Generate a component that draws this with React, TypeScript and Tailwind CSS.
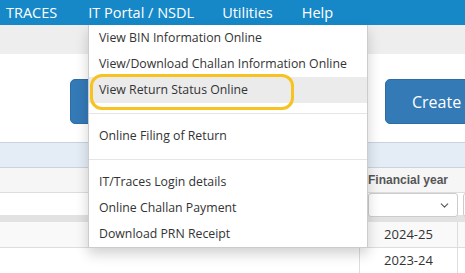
import { ChevronDown } from 'lucide-react'

const menu: (string | null)[] = [
  'View BIN Information Online',
  'View/Download Challan Information Online',
  'View Return Status Online',
  null,
  'Online Filing of Return',
  null,
  'IT/Traces Login details',
  'Online Challan Payment',
  'Download PRN Receipt',
]

function PortalMenu() {
  return (
    <div className="absolute left-[88px] top-[25px] w-[280px] border border-[#cccccc] border-t-0 bg-white shadow-[0_6px_12px_rgba(0,0,0,0.18)]">
      {menu.map((label, i) =>
        label === null ? (
          <div key={i} className="flex h-[20px] items-center">
            <div className="h-px w-full bg-[#e5e5e5]" />
          </div>
        ) : (
          <div
            key={i}
            className={`flex h-[26px] items-center whitespace-nowrap px-[10px] pt-px text-[12.3px] text-[#333333] ${
              i === 2 ? 'bg-[#ebebeb]' : ''
            }`}
          >
            {label}
          </div>
        ),
      )}
    </div>
  )
}

export default function App() {
  return (
    <div
      className="relative h-[273px] w-[465px] overflow-hidden bg-white"
      style={{ fontFamily: '"Open Sans", "Noto Sans", sans-serif' }}
    >
      <nav className="flex h-[25px] items-center whitespace-nowrap bg-[#1688c8] text-[14.5px] text-white">
        <span className="ml-[6px]">TRACES</span>
        <span className="ml-[31px]">IT Portal / NSDL</span>
        <span className="ml-[28px]">Utilities</span>
        <span className="ml-[29px]">Help</span>
      </nav>

      <div className="h-[29px] bg-[#eeeeee]" />

      <div className="flex h-[88px] items-start pt-[25px]">
        <div className="ml-[70px] h-[45px] w-[120px] shrink-0 rounded-[5px] border border-[#2e6da4] bg-[#337ab7]" />
        <div className="ml-[195px] flex h-[45px] w-[100px] shrink-0 items-center rounded-[5px] border border-[#2e6da4] bg-[#337ab7] pl-[26px] text-[16px] text-white">
          Create
        </div>
      </div>

      <div className="h-[26px] border-y border-[#c9d3df] bg-[#e4ecf6]" />

      <div className="flex h-[24px] items-center bg-[#f6f6f6]">
        <div className="w-[360px] shrink-0" />
        <span
          className="whitespace-nowrap pl-[8px] text-[12px] font-bold text-[#555555]"
          style={{ fontFamily: '"Liberation Sans", Arial, sans-serif' }}
        >
          Financial year
        </span>
      </div>

      <div className="flex h-[23px] border-t border-[#dddddd] bg-white">
        <div className="w-[368px] shrink-0" />
        <div className="flex h-[24px] w-[90px] shrink-0 items-center justify-end rounded-[3px] border border-[#cccccc] bg-white pr-[6px]">
          <ChevronDown size={13} strokeWidth={2} className="text-[#555555]" />
        </div>
        <div className="ml-[5px] h-[24px] w-[20px] shrink-0 rounded-[3px] border border-[#cccccc]" />
      </div>

      <div className="h-[7px] bg-[#e2e2e2]" />

      <div className="flex h-[26px] border-b border-[#dddddd] bg-[#f9f9f9] text-[13px] text-[#333333]">
        <div className="w-[360px] shrink-0 border-r border-[#dddddd]" />
        <div className="flex w-[98px] shrink-0 items-center justify-center border-r border-[#dddddd]">2024-25</div>
      </div>
      <div className="flex h-[26px] bg-white text-[13px] text-[#333333]">
        <div className="w-[360px] shrink-0 border-r border-[#dddddd]" />
        <div className="flex w-[98px] shrink-0 items-center justify-center border-r border-[#dddddd]">2023-24</div>
      </div>

      <PortalMenu />

      <div className="pointer-events-none absolute left-[90px] top-[74px] h-[36px] w-[204px] rounded-[12px] border-[3px] border-[#f6c321]" />
    </div>
  )
}
